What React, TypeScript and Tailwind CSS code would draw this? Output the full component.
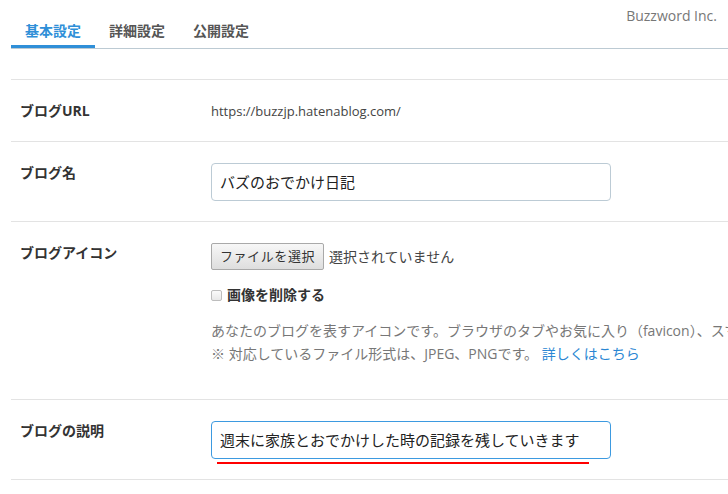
const jp = "font-['Open_Sans','Noto_Sans_CJK_JP',sans-serif]";

function Row({ label, children }: { label: string; children: React.ReactNode }) {
  return (
    <div className="flex border-t border-[#e3e3e3] pt-[21px]">
      <div className="w-[200px] shrink-0 pl-[9px] text-[14px] font-bold leading-[20px] text-[#333]">{label}</div>
      <div className="min-w-0 flex-1">{children}</div>
    </div>
  );
}

export default function App() {
  const tabs = ["基本設定", "詳細設定", "公開設定"];
  return (
    <div className={`h-[494px] w-[728px] overflow-hidden bg-white ${jp}`}>
      <header className="ml-[11px] flex h-[49px] justify-between border-b border-[#bccad3]">
        <nav className="flex">
          {tabs.map((t, i) => (
            <div
              key={t}
              className={
                "h-[48px] w-[84px] border-b-[3px] pt-[21px] text-center text-[14px] font-bold leading-[20px] " +
                (i === 0 ? "border-[#2f8fd8] text-[#2f8fd8]" : "border-transparent text-[#555]")
              }
            >
              {t}
            </div>
          ))}
        </nav>
        <div className="pr-[11px] pt-[6px] text-[14px] leading-[20px] text-[#777]">Buzzword Inc.</div>
      </header>

      <div className="ml-[11px] mt-[30px] text-[#444]">
        <Row label="ブログURL">
          <div className="pb-[20px] text-[13px] leading-[20px]">https://buzzjp.hatenablog.com/</div>
        </Row>

        <Row label="ブログ名">
          <div className="pb-[20px]">
            <div className="flex h-[38px] w-[400px] items-center rounded-[4px] border border-[#bccbd5] pl-[8px] text-[15px] text-[#222]">
              バズのおでかけ日記
            </div>
          </div>
        </Row>

        <Row label="ブログアイコン">
          <div className="pb-[34px]">
            <div className="flex items-center">
              <button className="h-[27px] w-[113px] rounded-[2px] border border-[#a9a9a9] bg-gradient-to-b from-[#f7f7f7] to-[#dedede] text-[13px] tracking-[0.6px] text-[#333]">
                ファイルを選択
              </button>
              <span className="ml-[5px] text-[14px] text-[#444]">選択されていません</span>
            </div>
            <label className="mt-[15px] flex items-center text-[14px] font-bold leading-[20px] text-[#333]">
              <span className="mr-[5px] inline-block h-[11px] w-[11px] rounded-[2px] border border-[#bdbdbd] bg-gradient-to-b from-[#fafafa] to-[#e8e8e8]" />
              画像を削除する
            </label>
            <div className="mt-[14px] text-[14px] leading-[23px] text-[#777]">
              <div className="whitespace-nowrap">
                あなたのブログを表すアイコンです。ブラウザのタブやお気に入り（favicon）、スマートフォンのホーム画面などに表示されます。
              </div>
              <div className="whitespace-nowrap">
                ※ 対応しているファイル形式は、JPEG、PNGです。 <span className="text-[#2b87d3]">詳しくはこちら</span>
              </div>
            </div>
          </div>
        </Row>

        <Row label="ブログの説明">
          <div className="pb-[15px]">
            <div className="flex h-[38px] w-[400px] items-center rounded-[4px] border border-[#3d9ae0] pl-[8px] text-[15px] text-[#222]">
              週末に家族とおでかけした時の記録を残していきます
            </div>
            <div className="ml-[6px] mt-[3px] h-[2px] w-[372px] bg-[#ff0000]" />
          </div>
        </Row>
        <div className="border-t border-[#e3e3e3]" />
      </div>
    </div>
  );
}
